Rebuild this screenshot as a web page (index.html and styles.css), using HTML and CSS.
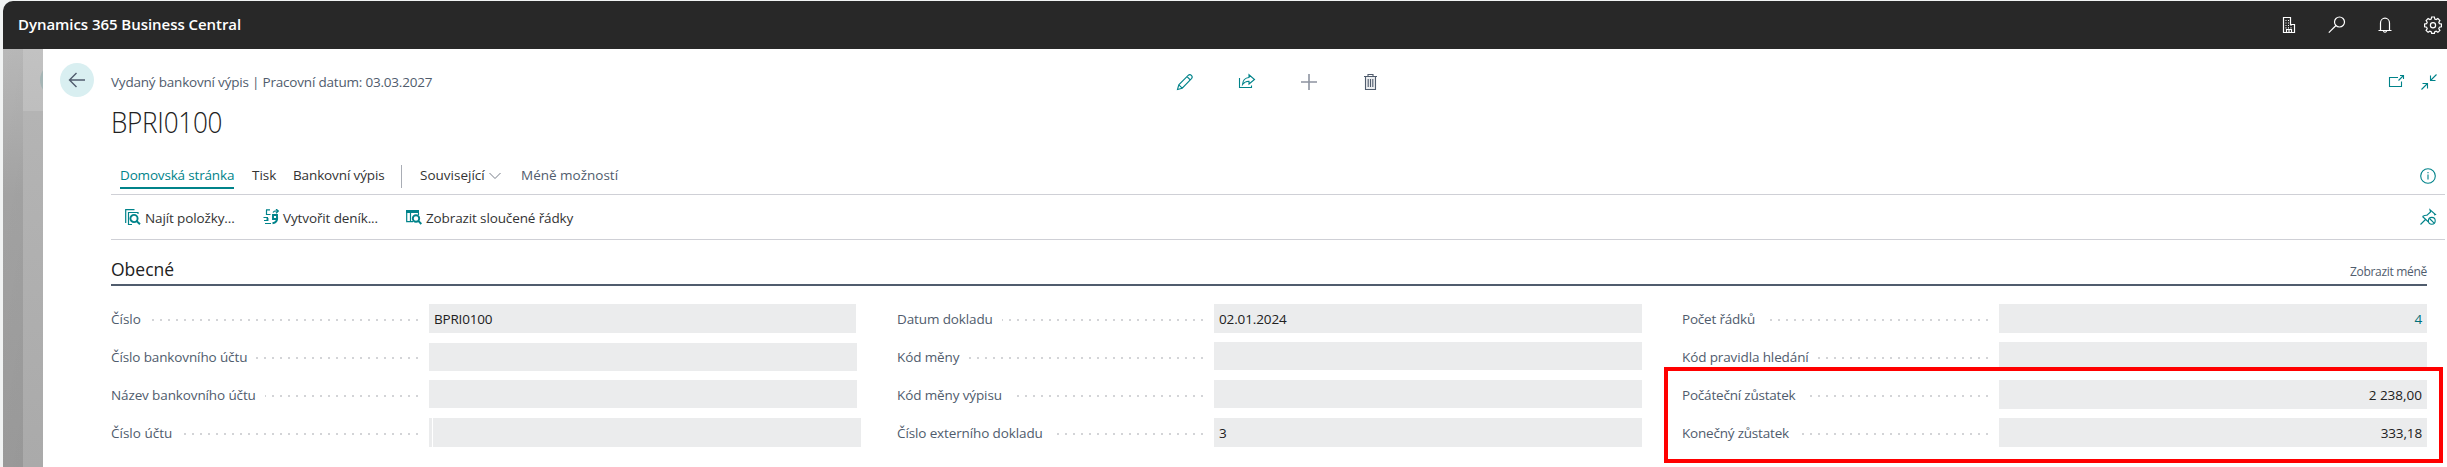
FILE: index.html
```html
<!DOCTYPE html>
<html lang="cs">
<head>
<meta charset="utf-8">
<title>BPRI0100</title>
<link rel="stylesheet" href="styles.css">
</head>
<body>
<header class="topbar">
  <span class="brand">Dynamics 365 Business Central</span>
  <div class="top-icons">
    <svg class="ti" viewBox="0 0 18 18"><path d="M3.500 16.500V1.500H10.500V8.500H14.500V16.500ZM6.500 16.500V13.500H11.500V16.500M9 14V16"/><path class="dots" d="M5.500 4.500H9M5.500 7H9M5.500 9.500H13M5.500 11.800H13"/></svg>
    <svg class="ti" viewBox="0 0 18 18"><circle cx="11.500" cy="6" r="5"/><path d="M8 9.500L.8 16.700"/></svg>
    <svg class="ti" viewBox="0 0 18 18"><path d="M2.500 14.500H15.500M4.500 14.500V7A4.500 4.800 0 0 1 13.500 7V14.500M7.300 15Q9 17.500 10.700 15"/></svg>
    <svg class="ti" viewBox="0 0 18 18"><path d="M7.600 1h2.800l.4 2 1.400.6L13.900 2.500l2 2L14.800 6.200l.6 1.400 2 .4v2.800l-2 .4-.6 1.400 1.100 1.700-2 2-1.700-1.100-1.400.6-.4 1.500H7.600l-.4-1.500-1.400-.6-1.700 1.100-2-2 1.100-1.700-.6-1.400-2-.4V8l2-.4.6-1.400L2.100 4.500l2-2L5.800 3.600 7.200 3z"/><circle cx="9" cy="9.300" r="2.600"/></svg>
  </div>
</header>
<div class="shell">
  <aside class="rail"><div class="rail-a"></div><div class="rail-b"><i class="peek"></i></div></aside>
  <main class="page">
    <button class="back" aria-label="Zpět"><svg viewBox="0 0 34 34"><path d="M25 17H9.500M16.500 10L9.500 17L16.500 24"/></svg></button>
    <div class="content">
      <div class="headline">
        <span class="crumb">Vydaný bankovní výpis | Pracovní datum: 03.03.2027</span>
        <div class="cmds">
          <svg class="ci teal" viewBox="0 0 18 18"><path d="M1.500 16.500L2.800 11.800L12.200 2.400Q13.800 .8 15.400 2.400T15.500 5.700L6.200 15.200ZM2.800 11.800L6.200 15.200M11 3.600L14.400 7"/></svg>
          <svg class="ci teal" viewBox="0 0 18 18"><path d="M1.500 5V14.500H13.500V12.500M4.500 11.500Q5 5 11 4.500V1.800L16.500 6.500L11 11V8.200Q7 8 4.500 11.500Z"/></svg>
          <svg class="ci plus" viewBox="0 0 18 18"><path d="M9 1V17M1 9H17"/></svg>
          <svg class="ci bin" viewBox="0 0 18 18"><path d="M3.500 3.500H13.500V16.500H3.500Z" class="fill"/><path d="M2 3.500H15M6 3V1.500H11V3M6.200 6V14M8.500 6V14M10.800 6V14"/></svg>
        </div>
        <div class="winds">
          <svg class="ci teal" viewBox="0 0 18 18"><path d="M10 4.500H1.500V13.500H13.500V8.500M10.500 7.500L15.500 2.500M12 2.500H15.500V6"/></svg>
          <svg class="ci teal" viewBox="0 0 18 18"><path d="M16.500 1.500L10.500 7.500M10.500 2.500V7.500H15.500M1.500 16.500L7.500 10.500M2.500 10.500H7.500V15.500"/></svg>
        </div>
      </div>
      <h1 class="title"><span class="title-text">BPRI0100</span></h1>
      <nav class="tabs">
        <a class="tab on">Domovská stránka</a>
        <a class="tab t2 even">Tisk</a>
        <a class="tab t3">Bankovní výpis</a>
        <i class="sep"></i>
        <a class="tab t4 even">Související</a>
        <svg class="chev" viewBox="0 0 12 8"><path d="M.5 1L6 6.500L11.500 1"/></svg>
        <a class="tab less even">Méně možností</a>
        <svg class="ci teal end" viewBox="0 0 18 18"><circle cx="9" cy="9" r="7.300"/><path d="M9 7.500V12.500M9 5V6.300"/></svg>
      </nav>
      <div class="actions">
        <div class="act a1"><svg class="ai" viewBox="0 0 16 16"><path d="M.7 14V.7H9.500M13 5V3.500H3.500V15.500H7" class="thin"/><circle cx="9" cy="9.500" r="3.600"/><path d="M11.500 12L15 15.300"/></svg><span>Najít položky...</span></div>
        <div class="act a2"><svg class="ai" viewBox="0 0 16 16"><path d="M3 .8H7M3.500 1V5.500H7.500M.5 8.500H5M1 11.500H4.500M2 14.500H8M10 3.500Q11 1.500 15 2M13 0L15.300 2L13 4.200" class="thin"/><path d="M10 6H14V10H10ZM14.200 8.500Q14.500 13.500 9.500 14.300M4.500 9V12"/></svg><span>Vytvořit deník...</span></div>
        <div class="act a3"><svg class="ai" viewBox="0 0 16 16"><path d="M0 1H13V4H0Z" class="solid"/><path d="M.7 2V12.700H7M4.500 4V12.500M12.500 4V6" class="thin"/><circle cx="10" cy="9.500" r="3.200"/><path d="M12.300 11.800L15.300 15"/></svg><span>Zobrazit sloučené řádky</span></div>
        <svg class="ci teal end" viewBox="0 0 18 18"><path d="M1.500 16.500L6.500 11.500M3.500 8.500L9.500 14M3.500 8.500Q6 7 8 7.200L11.500 4L11 1.800L16.500 6.500L15 7"/><circle cx="12.800" cy="12.800" r="3.400"/><path d="M10.500 10.500L15.200 15.200"/></svg>
      </div>
      <div class="section">
        <h2 class="sec-title">Obecné</h2>
        <a class="show-less">Zobrazit méně</a>
      </div>
      <div class="fields">
        <div class="col c1">
          <div class="row"><label class="even">Číslo</label><i class="lead"></i><div class="box short tight">BPRI0100</div></div>
          <div class="row"><label>Číslo bankovního účtu</label><i class="lead"></i><div class="box low"></div></div>
          <div class="row"><label>Název bankovního účtu</label><i class="lead"></i><div class="box thin-box"></div></div>
          <div class="row"><label class="even">Číslo účtu</label><i class="lead"></i><div class="box split"></div></div>
        </div>
        <div class="col">
          <div class="row"><label>Datum dokladu</label><i class="lead"></i><div class="box">02.01.2024</div></div>
          <div class="row"><label>Kód měny</label><i class="lead"></i><div class="box thin-box"></div></div>
          <div class="row"><label>Kód měny výpisu</label><i class="lead"></i><div class="box thin-box"></div></div>
          <div class="row"><label>Číslo externího dokladu</label><i class="lead"></i><div class="box">3</div></div>
        </div>
        <div class="col">
          <div class="row"><label class="tight">Počet řádků</label><i class="lead"></i><div class="box num link">4</div></div>
          <div class="row"><label>Kód pravidla hledání</label><i class="lead"></i><div class="box thin-box"></div></div>
          <div class="row"><label class="tight">Počáteční zůstatek</label><i class="lead"></i><div class="box num even">2 238,00</div></div>
          <div class="row"><label class="tight">Konečný zůstatek</label><i class="lead"></i><div class="box num">333,18</div></div>
        </div>
      </div>
    </div>
  </main>
</div>
<div class="mark"></div>
</body>
</html>
```
FILE: styles.css
```css
*{box-sizing:border-box}
body{margin:0;width:2447px;height:467px;overflow:hidden;background:#f1f3f3;font-family:"Open Sans","Noto Sans",sans-serif;font-size:13.5px;letter-spacing:-.12px;color:#333;line-height:20px}
svg{display:block;flex:none;fill:none}
.topbar{display:flex;justify-content:space-between;align-items:center;height:48px;margin:1px 0 0 3px;padding:0 5px 0 15px;background:#282828;border-top-left-radius:10px}
.brand{padding-bottom:2px;color:#fff;font-weight:600;font-size:15px;letter-spacing:-.05px}
.top-icons{display:flex;gap:30px}
.ti{width:18px;height:18px;stroke:#fff;stroke-width:1.200}
.ti .dots{stroke-dasharray:1 1.500}
.shell{display:flex;height:418px;margin-left:3px}
.rail{display:flex;flex:none;width:40px}
.rail-a{width:20px;background:linear-gradient(100deg,#0000,#0000000a),linear-gradient(#b8b8b8,#a4a4a4 35%,#9e9e9e)}
.rail-b{width:20px;padding-top:14px;overflow:hidden;background:linear-gradient(#c2c2c2,#bebebe 62px,#b4b4b4 62px,#aaa)}
.peek{display:block;width:34px;height:34px;margin-left:17px;border-radius:50%;background:#a5b5b5}
.page{display:flex;flex:1;min-width:0;gap:17px;padding:14px 0 0 17px;background:#fff}
.back{flex:none;width:34px;height:34px;padding:0;border:0;border-radius:50%;background:#d9eff1}
.back svg{width:34px;height:34px;stroke:#505c6d;stroke-width:1.400}
.content{flex:1;min-width:0}
.headline{display:flex;align-items:center;height:38px}
.crumb{width:1065px;color:#505c6d;letter-spacing:-.2px;white-space:nowrap}
.cmds{display:flex;gap:44px}
.winds{display:flex;gap:14px;margin-left:auto;padding-right:9px}
.ci{width:18px;height:18px;stroke-width:1.100}
.teal{stroke:#00838a}
.plus{stroke:#8d93a0;stroke-width:1.600}
.bin{stroke:#505c6d}
.bin .fill{fill:#eceef0}
.title{margin:0;height:50px;line-height:42px;font-size:29px;font-weight:300;color:#212121}
.title-text{display:inline-block;transform:scaleX(.9);transform-origin:0 50%;letter-spacing:-.3px}
.tabs{display:flex;align-items:center;height:44px;margin-right:2px;padding:7px 8px 0 9px;border-bottom:1px solid #cfd0d6}
.tab{white-space:nowrap;padding:3px 0;border-bottom:2px solid transparent;line-height:17px}
.on{width:114px;color:#00838a;border-color:#00838a;letter-spacing:-.17px}
.even{letter-spacing:0}
.tight{letter-spacing:-.2px}
.t2{width:24px;margin-left:18px}
.t3{width:91px;margin-left:17px}
.sep{width:1px;height:23px;margin:0 18px 0 17px;background:#a9adb5}
.t4{width:64px}
.chev{width:12px;height:8px;margin:0 20px 0 5px;stroke:#767d88}
.less{color:#505c6d}
.end{margin-left:auto}
.actions{display:flex;align-items:center;height:45px;margin-right:2px;padding:0 8px 0 14px;border-bottom:1px solid #cfd0d6}
.act{display:flex;align-items:center;gap:4px;white-space:nowrap}
.act span{padding-top:2px}
.a1{width:138px}
.a2{width:143px}
.ai{width:16px;height:16px;stroke:#00838a;stroke-width:1.900}
.ai .thin{stroke-width:1.200}
.ai .solid{fill:#00838a;stroke:none}
.section{display:flex;justify-content:space-between;height:46px;margin-right:20px;border-bottom:2px solid #505c6d}
.sec-title{margin:0;padding-top:19px;font-size:17.500px;font-weight:500;letter-spacing:0;color:#212121}
.show-less{padding-top:22px;font-size:12px;letter-spacing:-.3px;color:#505c6d}
.fields{display:flex;gap:40px;padding-top:18px}
.col{flex:none;width:745px}
.c1{width:746px}
.row{display:flex;height:38px}
label{color:#505c6d;line-height:30px;white-space:nowrap}
.lead{flex:1;height:2px;margin:15px 11px 0 9px;background:repeating-linear-gradient(to left,#d3d4d7 0 2px,transparent 2px 8px)}
.box{flex:none;width:428px;height:29px;padding:0 5px;line-height:30px;background:#ebeced;color:#212121}
.short{width:427px;margin-right:1px}
.thin-box{height:28px}
.low{height:28px;margin-top:1px}
.num{text-align:right}
.link{color:#00707a}
.split{width:432px;margin-right:-4px;background:linear-gradient(90deg,#ebeced 3px,#fff 3px 4px,#ebeced 4px)}
.mark{position:absolute;left:1664px;top:367px;width:779px;height:96px;border:4px solid #f00}
```
